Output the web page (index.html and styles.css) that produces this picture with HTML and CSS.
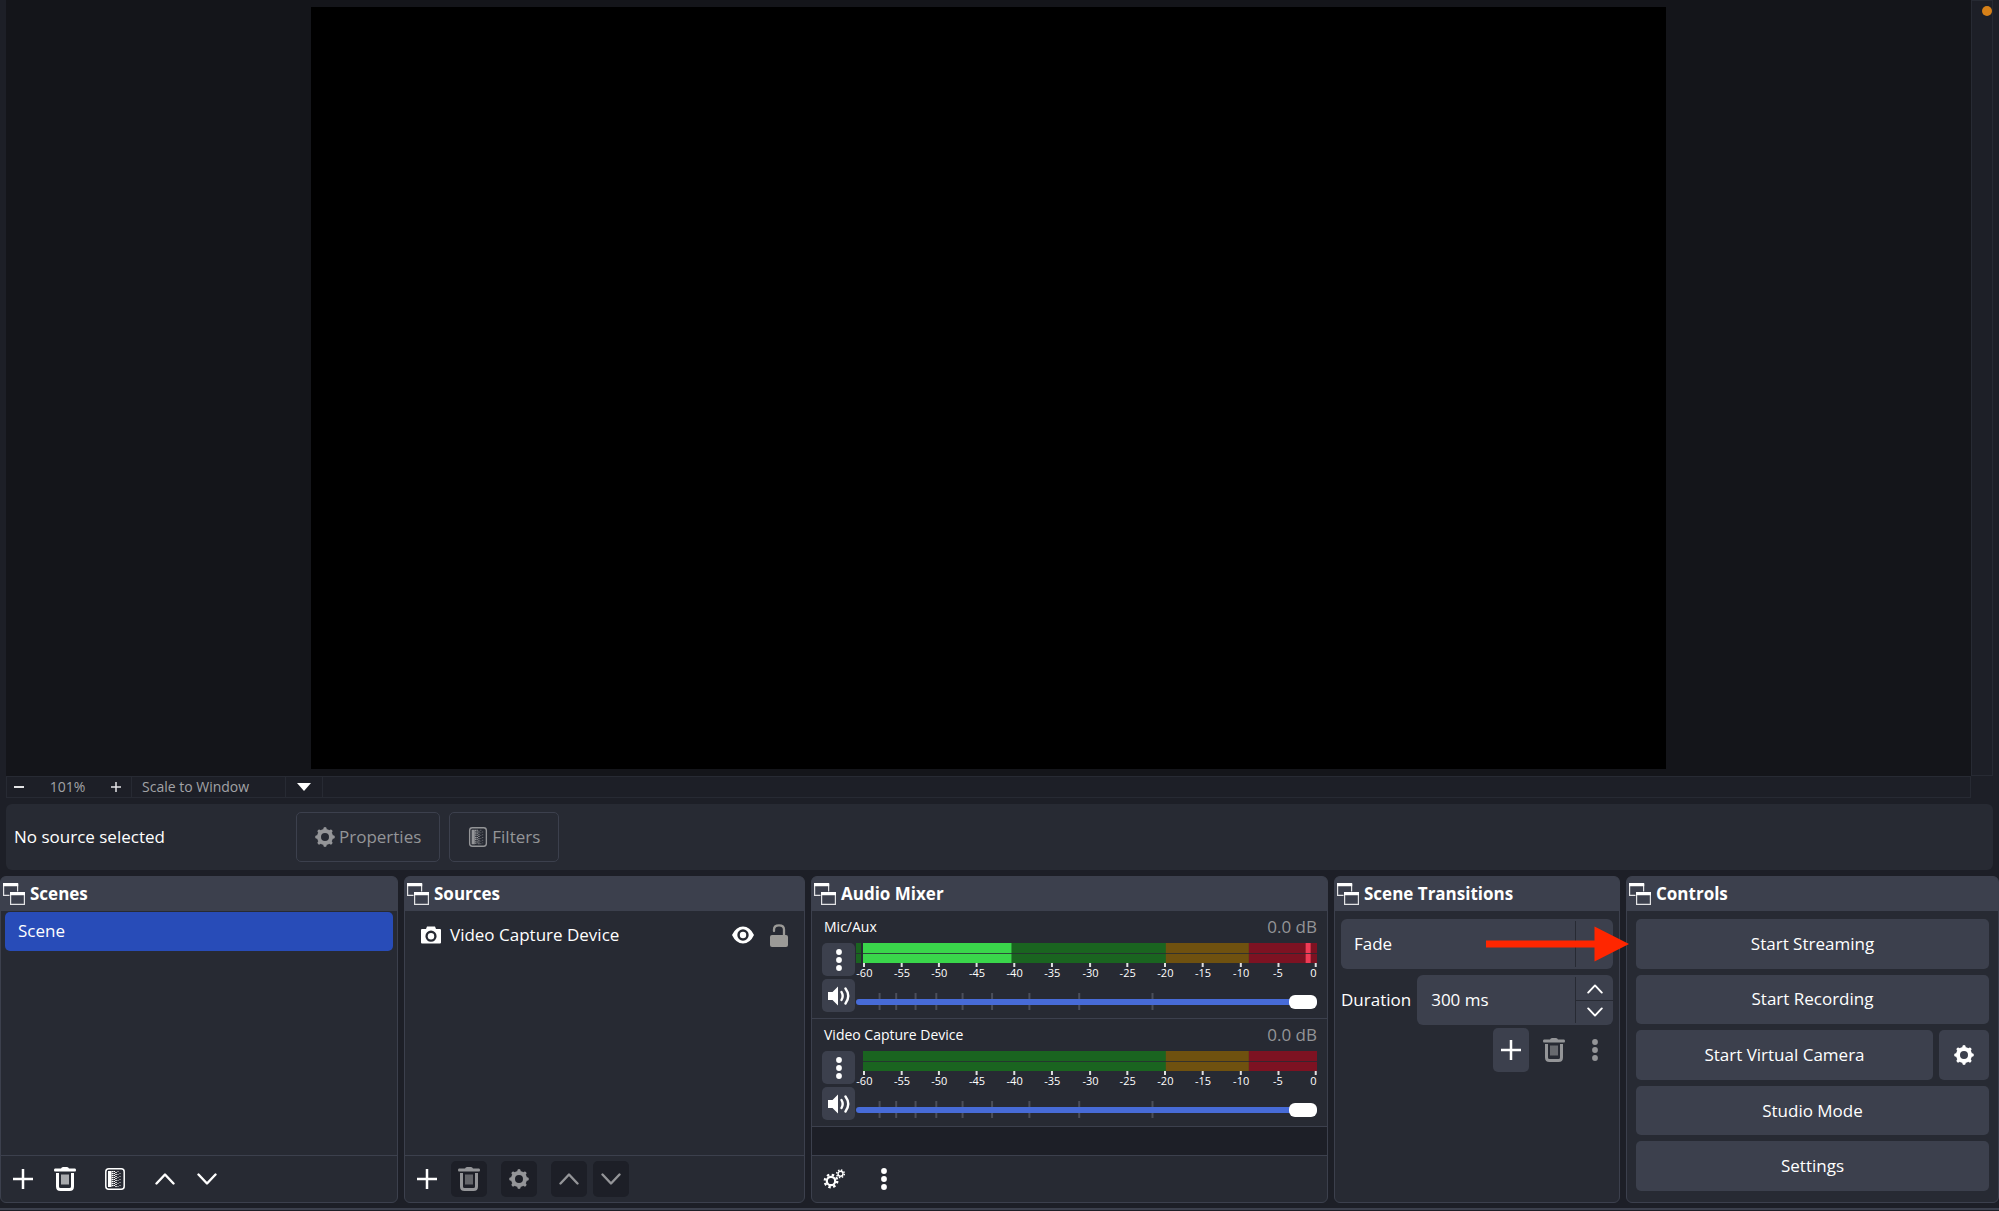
FILE: index.html
```html
<!DOCTYPE html>
<html lang="en">
<head>
<meta charset="utf-8">
<title>OBS Studio</title>
<link rel="stylesheet" href="styles.css">
</head>
<body>
<svg class="sprite" aria-hidden="true">
  <symbol id="i-float" viewBox="0 0 22 22"><path fill="none" stroke="currentColor" stroke-opacity=".85" stroke-width="1.2" d="M6.5 12.4H.6V1.5h14v7M7.6 10h13.8v11.4H7.6z"/><path fill="currentColor" d="M0 0h15.200v3.200H0zM7 9h15v3.200H7z"/></symbol>
  <symbol id="i-plus" viewBox="0 0 20 20"><path stroke="currentColor" stroke-width="2.500" d="M10 0v20M0 10h20"/></symbol>
  <symbol id="i-trash" viewBox="0 0 22 24"><path fill="none" stroke="currentColor" stroke-width="3" d="M3.500 6v13.500q0 3 3 3h9q3 0 3-3V6"/><path fill="currentColor" d="M1 1.500h6Q7.500 0 9 0h4q1.500 0 2 1.500h6q1 0 1 1.500t-1 1.500H1Q0 4.500 0 3t1-1.500z"/><path stroke="currentColor" stroke-width="1.200" d="M8 7.500v10M10 7.500v10M12 7.500v10M14 7.500v10"/></symbol>
  <symbol id="i-filter" viewBox="0 0 20 22"><rect x=".8" y=".8" width="18.400" height="20.400" rx="3" fill="none" stroke="currentColor" stroke-width="1.500"/><path fill="currentColor" d="M3 3h3.500v16H3z"/><path stroke="currentColor" stroke-width="1.600" stroke-dasharray="1.300 .7" d="M7.500 3v16"/><path stroke="currentColor" stroke-width="1.500" stroke-dasharray="1 1" d="M9.300 3v16M11 4v15"/><path stroke="currentColor" stroke-opacity=".55" stroke-width="1.500" stroke-dasharray="1 2" d="M13 3v16M15 5v14"/></symbol>
  <symbol id="i-up" viewBox="0 0 20 12"><path fill="none" stroke="currentColor" stroke-width="2.400" stroke-linecap="round" stroke-linejoin="round" d="M1.500 10.500 10 1.500l8.500 9"/></symbol>
  <symbol id="i-down" viewBox="0 0 20 12"><path fill="none" stroke="currentColor" stroke-width="2.400" stroke-linecap="round" stroke-linejoin="round" d="M1.500 1.500 10 10.500l8.500-9"/></symbol>
  <symbol id="i-gear" viewBox="0 0 20 20"><circle cx="10" cy="10" r="6" fill="none" stroke="currentColor" stroke-width="4"/><path stroke="currentColor" stroke-width="3.400" stroke-linecap="round" d="M10 1.800v1M10 17.200v1M1.800 10h1M17.200 10h1M4.200 4.200l.7.700M15.100 15.100l.7.700M4.200 15.800l.7-.7M15.100 4.900l.7-.7"/></symbol>
  <symbol id="i-gears" viewBox="0 0 22 20"><circle cx="8" cy="12" r="4.200" fill="none" stroke="currentColor" stroke-width="2.200"/><circle cx="8" cy="12" r="6.200" fill="none" stroke="currentColor" stroke-width="2.400" stroke-dasharray="2.400 2.470"/><circle cx="17.500" cy="4.800" r="2.500" fill="none" stroke="currentColor" stroke-width="1.400"/><circle cx="17.500" cy="4.800" r="3.800" fill="none" stroke="currentColor" stroke-width="1.500" stroke-dasharray="1.500 1.480"/></symbol>
  <symbol id="i-dots" viewBox="0 0 6 22"><circle cx="3" cy="3" r="2.900" fill="currentColor"/><circle cx="3" cy="11" r="2.900" fill="currentColor"/><circle cx="3" cy="19" r="2.900" fill="currentColor"/></symbol>
  <symbol id="i-speaker" viewBox="0 0 22 20"><path fill="currentColor" d="M0 6h4.500L10 .5v19L4.500 14H0z"/><path fill="none" stroke="currentColor" stroke-width="2.400" stroke-linecap="round" d="M13.500 6q2.400 4 0 8M17.500 2.500q5.500 7.500 0 15"/></symbol>
  <symbol id="i-camera" viewBox="0 0 20 18"><path fill="currentColor" fill-rule="evenodd" d="M1 3h4l1-2.500h8L15 3h4q1 0 1 1v12.500q0 1-1 1H1q-1 0-1-1V4q0-1 1-1zm9 1.600a5.600 5.600 0 1 0 0 11.200 5.600 5.600 0 0 0 0-11.200z"/><circle cx="10" cy="10.200" r="3.200" fill="currentColor"/></symbol>
  <symbol id="i-eye" viewBox="0 0 22 18"><path fill="currentColor" fill-rule="evenodd" d="M0 9Q4 .5 11 .5T22 9q-4 8.500-11 8.500T0 9zm11-5.700a5.700 5.700 0 1 0 0 11.400 5.700 5.700 0 0 0 0-11.400z"/><circle cx="11" cy="9" r="3.200" fill="currentColor"/></symbol>
  <symbol id="i-unlock" viewBox="0 0 18 23"><rect x="0" y="11" width="18" height="12" rx="2" fill="currentColor"/><path fill="none" stroke="currentColor" stroke-width="2.300" stroke-linecap="round" d="M4 7V5.500q0-4.200 5-4.200t5 4.200V12"/></symbol>
</svg>

<main class="preview">
  <div class="stage"><div class="canvas"></div></div>
  <div class="scroll-v"><span class="status-dot"></span></div>
  <div class="zoom-bar">
    <button class="zoom-btn" aria-label="Zoom out"><svg width="10" height="2"><path stroke="currentColor" stroke-width="2" d="M0 1h10"/></svg></button>
    <span class="zoom-level">101%</span>
    <button class="zoom-btn" aria-label="Zoom in"><svg width="10" height="10" viewBox="0 0 20 20"><path stroke="currentColor" stroke-width="3" d="M10 0v20M0 10h20"/></svg></button>
    <div class="scale-mode">
      <select class="scale-select" aria-label="Preview scaling"><option>Scale to Window</option></select>
      <span class="scale-arrow"><svg width="14" height="8"><path fill="currentColor" d="M0 0h14L7 8z"/></svg></span>
    </div>
  </div>
</main>

<section class="context">
  <span class="context-label">No source selected</span>
  <button class="outline-btn" disabled><svg width="20" height="20"><use href="#i-gear"/></svg>Properties</button>
  <button class="outline-btn" disabled><svg width="20" height="20"><use href="#i-filter"/></svg>Filters</button>
</section>

<div class="docks">
  <section class="dock">
    <h2 class="dock-title"><svg width="22" height="22"><use href="#i-float"/></svg>Scenes</h2>
    <ul class="scene-list"><li class="scene-item">Scene</li></ul>
    <div class="toolbar toolbar-scenes">
      <button class="tool" aria-label="Add scene"><svg width="20" height="20"><use href="#i-plus"/></svg></button>
      <button class="tool wide" aria-label="Remove scene"><svg width="22" height="24"><use href="#i-trash"/></svg></button>
      <button class="tool wide" aria-label="Scene filters"><svg width="20" height="22"><use href="#i-filter"/></svg></button>
      <button class="tool" aria-label="Move up"><svg width="20" height="12"><use href="#i-up"/></svg></button>
      <button class="tool" aria-label="Move down"><svg width="20" height="12"><use href="#i-down"/></svg></button>
    </div>
  </section>

  <section class="dock">
    <h2 class="dock-title"><svg width="22" height="22"><use href="#i-float"/></svg>Sources</h2>
    <ul class="source-list">
      <li class="source-item">
        <svg width="20" height="18"><use href="#i-camera"/></svg>
        <span class="source-name">Video Capture Device</span>
        <button class="icon-btn" aria-label="Visible"><svg width="22" height="18"><use href="#i-eye"/></svg></button>
        <button class="icon-btn lock" aria-label="Unlocked"><svg width="18" height="23"><use href="#i-unlock"/></svg></button>
      </li>
    </ul>
    <div class="toolbar toolbar-sources">
      <button class="tool" aria-label="Add source"><svg width="20" height="20"><use href="#i-plus"/></svg></button>
      <button class="tool wide" disabled aria-label="Remove source"><svg width="22" height="24"><use href="#i-trash"/></svg></button>
      <button class="tool wide" disabled aria-label="Source properties"><svg width="20" height="20"><use href="#i-gear"/></svg></button>
      <button class="tool" disabled aria-label="Move up"><svg width="20" height="12"><use href="#i-up"/></svg></button>
      <button class="tool" disabled aria-label="Move down"><svg width="20" height="12"><use href="#i-down"/></svg></button>
    </div>
  </section>

  <section class="dock">
    <h2 class="dock-title"><svg width="22" height="22"><use href="#i-float"/></svg>Audio Mixer</h2>
    <div class="mixer">
      <div class="channel">
        <div class="channel-head"><label for="vol-mic">Mic/Aux</label><output class="db">0.0 dB</output></div>
        <div class="channel-body">
          <div class="channel-buttons">
            <button class="square" aria-label="Mic/Aux options"><svg width="6" height="22"><use href="#i-dots"/></svg></button>
            <button class="square" aria-label="Mute Mic/Aux"><svg width="22" height="20"><use href="#i-speaker"/></svg></button>
          </div>
          <div class="channel-levels">
            <svg class="meter" height="40">
              <rect class="m-green" width="67%" height="20"/><rect class="m-yellow" x="66.700%" width="18.300%" height="20"/><rect class="m-red" x="85%" width="15%" height="20"/>
              <rect class="m-green" x="-7" width="5" height="20"/>
              <rect class="m-live" width="32.700%" height="20"/>
              <rect class="m-peak" x="97.500%" width="5" height="20"/>
              <rect class="m-gap" x="-7" y="10" width="102%" height="1"/>
              <g class="m-ticks"><rect x="0" y="20"/><rect x="8.300%" y="20"/><rect x="16.500%" y="20"/><rect x="24.800%" y="20"/><rect x="33.100%" y="20"/><rect x="41.400%" y="20"/><rect x="49.800%" y="20"/><rect x="58%" y="20"/><rect x="66.300%" y="20"/><rect x="74.600%" y="20"/><rect x="83%" y="20"/><rect x="91.300%" y="20"/><rect x="99.500%" y="20"/></g>
              <g class="m-labels"><text x=".3%" y="34">-60</text><text x="8.600%" y="34">-55</text><text x="16.800%" y="34">-50</text><text x="25.100%" y="34">-45</text><text x="33.400%" y="34">-40</text><text x="41.700%" y="34">-35</text><text x="50.100%" y="34">-30</text><text x="58.300%" y="34">-25</text><text x="66.600%" y="34">-20</text><text x="74.900%" y="34">-15</text><text x="83.300%" y="34">-10</text><text x="91.400%" y="34">-5</text><text x="99.200%" y="34">0</text></g>
            </svg>
            <div class="slider">
              <svg class="slider-ticks" height="17"><rect x="4.900%"/><rect x="8.500%"/><rect x="12.700%"/><rect x="17.200%"/><rect x="22.900%"/><rect x="29.300%"/><rect x="37.400%"/><rect x="48.200%"/><rect x="64.100%"/></svg>
              <input class="range" id="vol-mic" type="range" min="0" max="100" value="100">
            </div>
          </div>
        </div>
      </div>
      <div class="channel">
        <div class="channel-head"><label for="vol-cam">Video Capture Device</label><output class="db">0.0 dB</output></div>
        <div class="channel-body">
          <div class="channel-buttons">
            <button class="square" aria-label="Video Capture Device options"><svg width="6" height="22"><use href="#i-dots"/></svg></button>
            <button class="square" aria-label="Mute Video Capture Device"><svg width="22" height="20"><use href="#i-speaker"/></svg></button>
          </div>
          <div class="channel-levels">
            <svg class="meter" height="40">
              <rect class="m-green" width="67%" height="20"/><rect class="m-yellow" x="66.700%" width="18.300%" height="20"/><rect class="m-red" x="85%" width="15%" height="20"/>
              <rect class="m-gap" y="10" width="100%" height="1"/>
              <g class="m-ticks"><rect x="0" y="20"/><rect x="8.300%" y="20"/><rect x="16.500%" y="20"/><rect x="24.800%" y="20"/><rect x="33.100%" y="20"/><rect x="41.400%" y="20"/><rect x="49.800%" y="20"/><rect x="58%" y="20"/><rect x="66.300%" y="20"/><rect x="74.600%" y="20"/><rect x="83%" y="20"/><rect x="91.300%" y="20"/><rect x="99.500%" y="20"/></g>
              <g class="m-labels"><text x=".3%" y="34">-60</text><text x="8.600%" y="34">-55</text><text x="16.800%" y="34">-50</text><text x="25.100%" y="34">-45</text><text x="33.400%" y="34">-40</text><text x="41.700%" y="34">-35</text><text x="50.100%" y="34">-30</text><text x="58.300%" y="34">-25</text><text x="66.600%" y="34">-20</text><text x="74.900%" y="34">-15</text><text x="83.300%" y="34">-10</text><text x="91.400%" y="34">-5</text><text x="99.200%" y="34">0</text></g>
            </svg>
            <div class="slider">
              <svg class="slider-ticks" height="17"><rect x="4.900%"/><rect x="8.500%"/><rect x="12.700%"/><rect x="17.200%"/><rect x="22.900%"/><rect x="29.300%"/><rect x="37.400%"/><rect x="48.200%"/><rect x="64.100%"/></svg>
              <input class="range" id="vol-cam" type="range" min="0" max="100" value="100">
            </div>
          </div>
        </div>
      </div>
    </div>
    <div class="toolbar toolbar-mixer">
      <button class="tool" aria-label="Advanced audio properties"><svg width="22" height="20"><use href="#i-gears"/></svg></button>
      <button class="tool" aria-label="Mixer menu"><svg width="6" height="22"><use href="#i-dots"/></svg></button>
    </div>
  </section>

  <section class="dock">
    <h2 class="dock-title"><svg width="22" height="22"><use href="#i-float"/></svg>Scene Transitions</h2>
    <div class="transitions">
      <div class="combo">
        <select class="combo-select" aria-label="Transition"><option>Fade</option></select>
        <span class="combo-drop"></span>
        <svg class="pointer" width="143" height="36" viewBox="0 0 143 36"><path fill="#ff2600" d="M0 14.500h108.500V.5L143 18l-34.500 17.500v-14H0z"/></svg>
      </div>
      <div class="duration">
        <label for="duration">Duration</label>
        <div class="spin">
          <input class="spin-input" id="duration" type="text" value="300 ms">
          <div class="spin-steps">
            <button class="step" aria-label="Increase"><svg width="16" height="10"><use href="#i-up"/></svg></button>
            <button class="step" aria-label="Decrease"><svg width="16" height="10"><use href="#i-down"/></svg></button>
          </div>
        </div>
      </div>
      <div class="transition-tools">
        <button class="tall filled" aria-label="Add transition"><svg width="20" height="20"><use href="#i-plus"/></svg></button>
        <button class="tall" disabled aria-label="Remove transition"><svg width="22" height="24"><use href="#i-trash"/></svg></button>
        <button class="tall" disabled aria-label="Transition menu"><svg width="6" height="22"><use href="#i-dots"/></svg></button>
      </div>
    </div>
  </section>

  <section class="dock">
    <h2 class="dock-title"><svg width="22" height="22"><use href="#i-float"/></svg>Controls</h2>
    <div class="controls">
      <button class="control">Start Streaming</button>
      <button class="control">Start Recording</button>
      <div class="control-pair">
        <button class="control">Start Virtual Camera</button>
        <button class="control" aria-label="Virtual camera settings"><svg width="20" height="20"><use href="#i-gear"/></svg></button>
      </div>
      <button class="control">Studio Mode</button>
      <button class="control">Settings</button>
    </div>
  </section>
</div>
<footer class="statusbar"></footer>
</body>
</html>
```

FILE: styles.css
```css
:root {
  --page: #1d1f27;
  --panel: #272a33;
  --raised: #3c404d;
  --muted: #949598;
}
* { box-sizing: border-box; }
body {
  margin: 0;
  min-height: 100vh;
  display: flex;
  flex-direction: column;
  background: var(--page);
  color: #fff;
  font: 17px/24px "Open Sans", "Noto Sans", sans-serif;
}
button, input, select {
  font: inherit;
  color: inherit;
  background: none;
  border: 0;
  margin: 0;
  padding: 0;
}
button { display: flex; align-items: center; justify-content: center; }
select { appearance: none; }
svg { display: block; flex: none; }
ul { list-style: none; margin: 0; padding: 0; }
.sprite { position: absolute; width: 0; height: 0; }

/* Preview */
.preview {
  flex: 1;
  min-height: 400px;
  display: grid;
  grid-template: minmax(0, 1fr) 22px / minmax(0, 1fr) 22px;
  padding: 0 6px;
}
.stage {
  display: flex;
  justify-content: center;
  padding: 7px 0;
  background: #14151a;
}
.canvas { height: 100%; aspect-ratio: 16 / 9; background: #000; }
.scroll-v { position: relative; border: 1px solid var(--panel); }
.status-dot {
  position: absolute;
  top: 5px;
  right: 0;
  width: 10px;
  height: 10px;
  border-radius: 50%;
  background: #d68018;
}
.zoom-bar {
  display: flex;
  align-items: center;
  border: 1px solid var(--panel);
  font-size: 14px;
  line-height: 20px;
  color: #a2a3a6;
}
.zoom-btn { width: 24px; height: 20px; color: #e4e4e6; }
.zoom-level { width: 73px; text-align: center; }
.scale-mode {
  display: flex;
  margin-left: 3px;
  border: solid var(--panel);
  border-width: 0 1px;
}
.scale-select { width: 153px; padding-left: 10px; }
.scale-arrow {
  width: 37px;
  display: flex;
  align-items: center;
  justify-content: center;
  border-left: 1px solid var(--panel);
  color: #fff;
}

/* Source context bar */
.context {
  display: flex;
  align-items: center;
  gap: 9px;
  margin: 6px;
  padding: 8px;
  border-radius: 6px;
  background: var(--panel);
}
.context-label { width: 273px; }
.outline-btn {
  height: 50px;
  gap: 4px;
  padding: 0 18px;
  border: 1px solid var(--raised);
  border-radius: 5px;
  color: var(--muted);
}

/* Docks */
.docks {
  display: grid;
  grid-template-columns: minmax(0, 398fr) minmax(0, 401fr) minmax(0, 517fr) minmax(0, 286fr) minmax(0, 373fr);
  gap: 6px;
  min-height: 327px;
}
.dock {
  display: flex;
  flex-direction: column;
  border: 1px solid var(--raised);
  border-radius: 6px;
  background: var(--panel);
}
.dock-title {
  display: flex;
  align-items: center;
  gap: 5px;
  height: 34px;
  margin: 0;
  padding: 0 2px;
  border-radius: 4px 4px 0 0;
  background: var(--raised);
  font-size: 17px;
  font-weight: 700;
}
.scene-list, .source-list, .mixer { flex: 1; }
.scene-list { padding: 1px 4px; }
.scene-item {
  padding: 7px 13px 8px;
  border-radius: 5px;
  background: #284cb8;
}
.source-item {
  display: flex;
  align-items: center;
  gap: 9px;
  padding: 12px 16px;
}
.source-name { flex: 1; }
.lock { margin-left: 7px; color: #9b9a97; }

.toolbar {
  display: flex;
  align-items: center;
  height: 47px;
  padding: 0 4px;
  border-top: 1px solid var(--raised);
}
.tool { width: 36px; height: 36px; border-radius: 5px; }
.tool:disabled { background: var(--page); color: var(--muted); }
.toolbar-scenes, .toolbar-sources { gap: 6px; }
.wide { margin-right: 8px; }
.toolbar-mixer { gap: 14px; }

/* Mixer */
.mixer { background: var(--page); }
.channel {
  height: 108px;
  padding: 5px 10px 5px;
  border-bottom: 1px solid var(--raised);
  background: var(--panel);
}
.channel-head {
  display: flex;
  justify-content: space-between;
  align-items: center;
  height: 22px;
  margin-bottom: 5px;
  padding-left: 2px;
  font-size: 14px;
}
.db { font-size: 17px; color: var(--muted); }
.channel-body { display: flex; gap: 1px; }
.channel-buttons { display: flex; flex-direction: column; gap: 3px; }
.square { width: 33px; height: 33px; border-radius: 5px; background: var(--raised); }
.channel-levels { flex: 1; display: flex; flex-direction: column; gap: 10px; }
.meter { width: calc(100% - 7px); margin-left: 7px; overflow: visible; }
.m-green { fill: #1a6420; }
.m-yellow { fill: #6f510f; }
.m-red { fill: #7d1222; }
.m-live { fill: #3ad64b; }
.m-peak { fill: #f03c56; }
.m-gap { fill: #272a33; fill-opacity: .8; }
.m-ticks rect { width: 2px; height: 4px; fill: #e0e0e2; }
.m-labels { font-size: 11px; fill: #fff; text-anchor: middle; }
.slider { display: grid; align-items: center; }
.slider > * { grid-area: 1 / 1; width: 100%; }
.slider-ticks rect { width: 2px; height: 17px; fill: #4b4e5a; }
.range { appearance: none; position: relative; height: 14px; }
.range::-webkit-slider-runnable-track { height: 6px; border-radius: 3px; background: #476bd7; }
.range::-webkit-slider-thumb {
  appearance: none;
  width: 28px;
  height: 14px;
  margin-top: -4px;
  border-radius: 6px;
  background: #fff;
}

/* Transitions */
.transitions { padding: 8px 6px; }
.combo, .spin {
  position: relative;
  display: flex;
  height: 50px;
  border-radius: 6px;
  background: var(--raised);
}
.combo-select, .spin-input { flex: 1; min-width: 0; }
.combo-select { padding-left: 13px; }
.combo-drop, .spin-steps { flex: none; width: 38px; margin: 2px 0; border-left: 1px solid var(--panel); }
.pointer { position: absolute; right: -16px; top: 7px; z-index: 1; }
.duration { display: flex; align-items: center; gap: 6px; margin: 6px 0 3px; }
.spin { flex: 1; min-width: 0; }
.spin-input { padding-left: 14px; }
.spin-steps { display: grid; grid-template-rows: 1fr 1fr; }
.step + .step { border-top: 1px solid var(--panel); }
.transition-tools { display: flex; justify-content: flex-end; gap: 5px; }
.tall { width: 36px; height: 44px; border-radius: 5px; }
.tall:disabled { color: var(--muted); }
.filled { background: var(--raised); margin-right: 2px; }

/* Controls */
.controls {
  flex: 1;
  display: grid;
  grid-auto-rows: 1fr;
  gap: 6px;
  padding: 8px 9px 11px;
}
.control { min-height: 48px; border-radius: 5px; background: var(--raised); }
.control-pair { display: grid; grid-template-columns: 1fr 50px; gap: 6px; }

.statusbar {
  height: 3px;
  margin-top: 5px;
  border-top: 2px solid var(--raised);
}
```
